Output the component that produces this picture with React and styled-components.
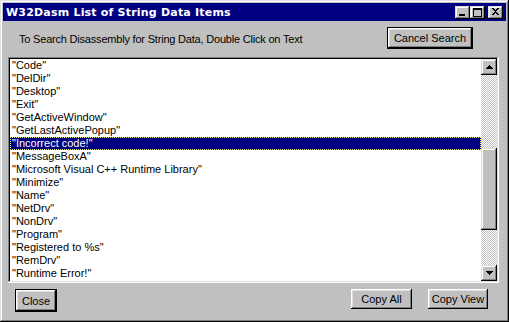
import React from "react";
import styled, { createGlobalStyle } from "styled-components";

const Global = createGlobalStyle`
  html, body { margin: 0; padding: 0; background: #c0c0c0; }
  body { width: 509px; height: 322px; overflow: hidden; }
  * { box-sizing: border-box; }
`;

const Window = styled.div`
  width: 509px;
  height: 322px;
  background: #c0c0c0;
  padding: 3px;
  display: flex;
  flex-direction: column;
  box-shadow: inset -1px -1px #000, inset 1px 1px #dfdfdf,
    inset -2px -2px #808080, inset 2px 2px #fff;
  font-family: "Liberation Sans", Arial, sans-serif;
`;

const TitleBar = styled.div`
  height: 18px;
  background: #000080;
  display: flex;
  align-items: center;
  padding: 0 3px 0 3px;
`;

const Title = styled.div`
  flex: 1;
  color: #fff;
  font-family: "DejaVu Sans", Verdana, sans-serif;
  font-weight: bold;
  font-size: 11px;
  letter-spacing: 0.2px;
  white-space: nowrap;
`;

const CaptionButtons = styled.div`
  display: flex;
  align-items: center;
`;

const CaptionButton = styled.div`
  width: 15px;
  height: 13px;
  margin-left: ${(p) => p.$gap || 0}px;
  background: #c0c0c0;
  box-shadow: inset -1px -1px #000, inset 1px 1px #dfdfdf,
    inset -2px -2px #808080, inset 2px 2px #fff;
  display: flex;
  align-items: center;
  justify-content: center;
  svg { display: block; }
`;

const Body = styled.div`
  flex: 1;
  display: flex;
  flex-direction: column;
  padding: 0 8px 0 5px;
`;

const Header = styled.div`
  height: 36px;
  display: flex;
  align-items: center;
  justify-content: space-between;
  padding: 0 25px 2px 11px;
`;

const Label = styled.div`
  font-size: 11px;
  letter-spacing: -0.2px;
  color: #000;
  margin-top: 2px;
`;

const Button = styled.button`
  font-family: "Liberation Sans", Arial, sans-serif;
  font-size: 11px;
  color: #000;
  background: #c0c0c0;
  width: ${(p) => p.$w}px;
  height: ${(p) => p.$h}px;
  margin-left: ${(p) => p.$ml || 0}px;
  padding: 0;
  border: none;
  border-radius: 0;
  box-shadow: inset -1px -1px #000, inset 1px 1px #fff,
    inset -2px -2px #808080, inset 2px 2px #dfdfdf;
`;

const DefaultButton = styled(Button)`
  border: 1px solid #000;
`;

const ListBox = styled.div`
  height: 226px;
  width: 491px;
  padding: 2px;
  background: #fff;
  display: flex;
  box-shadow: inset -1px -1px #fff, inset 1px 1px #808080,
    inset -2px -2px #dfdfdf, inset 2px 2px #000;
`;

const Items = styled.ul`
  flex: 1;
  margin: 0;
  padding: 0;
  list-style: none;
  overflow: hidden;
`;

const Item = styled.li`
  height: 13px;
  line-height: 13px;
  font-size: 11px;
  padding-left: 2px;
  white-space: nowrap;
  color: ${(p) => (p.$selected ? "#fff" : "#000")};
  background: ${(p) => (p.$selected ? "#000080" : "transparent")};
  outline: ${(p) => (p.$selected ? "1px dotted #f4f080" : "none")};
  outline-offset: -1px;
`;

const ScrollBar = styled.div`
  width: 16px;
  display: flex;
  flex-direction: column;
`;

const Track = styled.div`
  flex: ${(p) => p.$flex};
  background: repeating-conic-gradient(#c0c0c0 0 25%, #fff 0 50%) 0 0 / 2px 2px;
`;

const ArrowButton = styled.div`
  width: 16px;
  height: 16px;
  background: #c0c0c0;
  box-shadow: inset -1px -1px #000, inset 1px 1px #dfdfdf,
    inset -2px -2px #808080, inset 2px 2px #fff;
  display: flex;
  align-items: center;
  justify-content: center;
  svg { display: block; }
`;

const Thumb = styled.div`
  height: 82px;
  background: #c0c0c0;
  box-shadow: inset -1px -1px #000, inset 1px 1px #dfdfdf,
    inset -2px -2px #808080, inset 2px 2px #fff;
`;

const Footer = styled.div`
  display: flex;
  align-items: flex-start;
  padding: 6px 10px 0 7px;
`;

const Spacer = styled.div`
  flex: 1;
`;

const items = [
  "Code",
  "DelDir",
  "Desktop",
  "Exit",
  "GetActiveWindow",
  "GetLastActivePopup",
  "Incorrect code!",
  "MessageBoxA",
  "Microsoft Visual C++ Runtime Library",
  "Minimize",
  "Name",
  "NetDrv",
  "NonDrv",
  "Program",
  "Registered to %s",
  "RemDrv",
  "Runtime Error!",
];

export default function App() {
  return (
    <>
      <Global />
      <Window>
        <TitleBar>
          <Title>W32Dasm List of String Data Items</Title>
          <CaptionButtons>
            <CaptionButton>
              <svg width="9" height="9" viewBox="0 0 9 9">
                <rect x="1" y="6" width="6" height="2" fill="#000" />
              </svg>
            </CaptionButton>
            <CaptionButton>
              <svg width="9" height="9" viewBox="0 0 9 9">
                <rect x="0.5" y="0.5" width="8" height="8" fill="none" stroke="#000" />
                <rect x="0" y="0" width="9" height="2" fill="#000" />
              </svg>
            </CaptionButton>
            <CaptionButton $gap={3}>
              <svg width="9" height="8" viewBox="0 0 9 8">
                <path d="M1 0h2v1h1v1h1V1h1V0h2v1H7v1H6v1H5v1h1v1h1v1h1v1H6V6H5V5H4v1H3v1H1V6h1V5h1V4h1V3H3V2H2V1H1z" fill="#000" />
              </svg>
            </CaptionButton>
          </CaptionButtons>
        </TitleBar>
        <Body>
          <Header>
            <Label>To Search Disassembly for String Data, Double Click on Text</Label>
            <DefaultButton $w={86} $h={22}>Cancel Search</DefaultButton>
          </Header>
          <ListBox>
            <Items>
              {items.map((t, i) => (
                <Item key={t} $selected={i === 6}>
                  "{t}"
                </Item>
              ))}
            </Items>
            <ScrollBar>
              <ArrowButton>
                <svg width="7" height="4" viewBox="0 0 7 4">
                  <path d="M3 0h1v1h1v1h1v1h1v1H0V3h1V2h1V1h1z" fill="#000" />
                </svg>
              </ArrowButton>
              <Track $flex={73} />
              <Thumb />
              <Track $flex={35} />
              <ArrowButton>
                <svg width="7" height="4" viewBox="0 0 7 4">
                  <path d="M0 0h7v1H6v1H5v1H4v1H3V3H2V2H1V1H0z" fill="#000" />
                </svg>
              </ArrowButton>
            </ScrollBar>
          </ListBox>
          <Footer>
            <DefaultButton $w={42} $h={23}>Close</DefaultButton>
            <Spacer />
            <Button $w={61} $h={20}>Copy All</Button>
            <Button $w={60} $h={20} $ml={16}>Copy View</Button>
          </Footer>
        </Body>
      </Window>
    </>
  );
}
